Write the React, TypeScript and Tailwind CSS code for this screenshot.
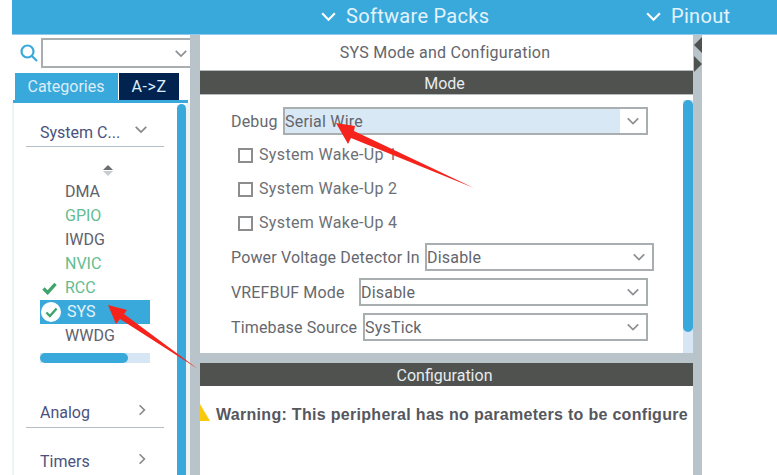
const font = { fontFamily: "Roboto, sans-serif" };

function Chevron({ className }: { className: string }) {
  return (
    <svg viewBox="0 0 16 10" fill="none" stroke="currentColor" strokeWidth="2" className={className}>
      <path d="M2 2l6 6 6-6" />
    </svg>
  );
}

function CheckRow({ label }: { label: string }) {
  return (
    <div className="flex h-[28px] items-center pl-[7px]">
      <div className="h-[15px] w-[15px] border-2 border-[#8b8d8f] bg-white" />
      <span className="ml-[6px] text-[16px] tracking-[0.35px] text-[#6e7076]">{label}</span>
    </div>
  );
}

function SelectRow(props: { label: string; labelW: string; selectW: string; value: string; first?: boolean }) {
  return (
    <div className="flex h-[28px] items-center">
      <span className={`${props.labelW} shrink-0 pt-[2px] text-[16px] tracking-[0.15px] text-[#66686f]`}>{props.label}</span>
      <div className={`${props.selectW} flex h-[28px] items-center border-2 border-[#a9aeb1] bg-white`}>
        <div className={`flex h-full flex-1 items-center pt-[2px] text-[16px] tracking-[0.2px] text-[#63656c] ${props.first ? "bg-[#d9e8f5]" : ""}`}>
          {props.value}
        </div>
        <Chevron className="mx-[6px] h-[10px] w-[14px] text-[#8e9093]" />
      </div>
    </div>
  );
}

function SideItem({ label, green, check }: { label: string; green?: boolean; check?: boolean }) {
  return (
    <div className={`relative flex h-[24px] items-center pl-[25px] text-[16px] ${green ? "text-[#63bd90]" : "text-[#5f616b]"}`}>
      {check && (
        <svg viewBox="0 0 16 14" className="absolute left-[2px] top-[6px] h-[13px] w-[15px] text-[#3fa46a]" fill="none" stroke="currentColor" strokeWidth="3.5">
          <path d="M1.5 7l4.5 4.5L14.5 2" />
        </svg>
      )}
      {label}
    </div>
  );
}

function Group({ label, open }: { label: string; open?: boolean }) {
  return (
    <div className={`ml-[12px] flex h-[31px] w-[138px] items-center border-b border-[#b4bec6] pl-[14px] text-[16px] text-[#4a5280] ${open ? "pt-[4px]" : "pt-[1px]"}`}>
      <span className="flex-1">{label}</span>
      {open ? (
        <Chevron className="mr-[16px] mb-[8px] h-[9px] w-[14px] text-[#85878a]" />
      ) : (
        <svg viewBox="0 0 10 16" fill="none" stroke="#85878a" strokeWidth="2" className="mr-[18px] mb-[6px] h-[14px] w-[8px]">
          <path d="M2 2l6 6-6 6" />
        </svg>
      )}
    </div>
  );
}

export default function App() {
  return (
    <div className="relative flex h-[475px] w-[777px] flex-col overflow-hidden bg-white" style={font}>
      {/* top bar */}
      <div className="ml-[12px] flex h-[35px] shrink-0 items-center border-b border-[#8fcbe9] bg-[#39a9dc] pb-[2px] text-[20px] tracking-[0.3px] text-[#e4f3fb]">
        <Chevron className="ml-[308px] h-[11px] w-[17px] text-white" />
        <span className="ml-[9px] w-[299px]">Software Packs</span>
        <Chevron className="h-[11px] w-[17px] text-white" />
        <span className="ml-[9px]">Pinout</span>
      </div>

      <div className="flex min-h-0 flex-1">
        {/* left tree */}
        <div className="ml-[12px] flex w-[178px] shrink-0 flex-col">
          <div className="flex h-[33px] shrink-0 items-center pt-[3px]">
            <svg viewBox="0 0 18 18" fill="none" stroke="#39a9dc" strokeWidth="2.2" className="ml-[8px] h-[18px] w-[18px]">
              <circle cx="7.5" cy="7.5" r="6" />
              <path d="M12 12l5 5" />
            </svg>
            <div className="ml-[3px] flex h-[30px] flex-1 items-center justify-end border-2 border-r-0 border-[#a9aeb1] pr-[2px]">
              <Chevron className="h-[9px] w-[14px] text-[#8e9093]" />
            </div>
          </div>
          <div className="mt-[5px] flex h-[27px] shrink-0 gap-[1px] pl-[3px] text-[16px] text-[#dcedf7]">
            <div className="flex w-[103px] items-center justify-center bg-[#39a9dc] pr-[1px]">Categories</div>
            <div className="flex w-[60px] items-center justify-center bg-[#022350] tracking-[0.6px]">A-&gt;Z</div>
          </div>
          <div className="ml-[1px] mr-[2px] h-[3px] shrink-0 bg-[#39a9dc]" />
          <div className="flex min-h-0 flex-1 border-l-2 border-[#eef3f5]">
            <div className="w-[163px] shrink-0">
              <div className="pt-[13px]">
                <Group label="System C..." open />
              </div>
              <div className="ml-[26px] w-[110px]">
                <div className="flex h-[32px] flex-col items-center justify-center gap-[1px] pt-[14px] pl-[26px]">
                  <div className="h-0 w-0 border-x-[5px] border-b-[5px] border-x-transparent border-b-[#6b6e70]" />
                  <div className="h-0 w-0 border-x-[5px] border-t-[5px] border-x-transparent border-t-[#c9cccd]" />
                </div>
                <div className="pt-[1px]">
                  <SideItem label="DMA" />
                  <SideItem label="GPIO" green />
                  <SideItem label="IWDG" />
                  <SideItem label="NVIC" green />
                  <SideItem label="RCC" green check />
                  <div className="relative flex h-[24px] items-center bg-[#39a9dc] pl-[27px] text-[16px] text-[#e4f3fb]">
                    <div className="absolute left-[1px] top-[2px] flex h-[20px] w-[20px] items-center justify-center rounded-full bg-white">
                      <svg viewBox="0 0 16 14" className="h-[11px] w-[13px]" fill="none" stroke="#3fa46a" strokeWidth="3">
                        <path d="M1.5 7l4.5 4.5L14.5 2" />
                      </svg>
                    </div>
                    SYS
                  </div>
                  <SideItem label="WWDG" />
                </div>
                <div className="mt-[5px] h-[10px] w-[110px] bg-[#d6e6f4]">
                  <div className="h-full w-[88px] rounded-full bg-[#39a9dc]" />
                </div>
              </div>
              <div className="pt-[34px]">
                <Group label="Analog" />
              </div>
              <div className="pt-[18px]">
                <Group label="Timers" />
              </div>
            </div>
            <div className="mt-[1px] w-[9px] shrink-0 rounded-t-full bg-[#39a9dc]" />
            <div className="w-[4px] shrink-0 bg-[#eef4f5]" />
          </div>
        </div>

        {/* left splitter */}
        <div className="w-[10px] shrink-0 bg-[#b8c4ca]" />

        {/* mode panel */}
        <div className="flex w-[493px] shrink-0 flex-col overflow-hidden bg-white">
          <div className="flex h-[35px] shrink-0 items-center justify-center pt-[1px] pr-[3px] text-[16px] tracking-[0.25px] text-[#63656c]">
            SYS Mode and Configuration
          </div>
          <div className="flex h-[25px] shrink-0 items-center justify-center border-y border-[#b5bcc0] bg-[#505250] pt-[2px] pr-[4px] text-[16px] text-[#e6ecef]">
            Mode
          </div>
          <div className="flex min-h-0 flex-1">
            <div className="flex flex-1 flex-col gap-[6px] pl-[31px] pt-[12px]">
              <SelectRow label="Debug" labelW="w-[52px]" selectW="w-[365px]" value="Serial Wire" first />
              <CheckRow label="System Wake-Up 1" />
              <CheckRow label="System Wake-Up 2" />
              <CheckRow label="System Wake-Up 4" />
              <SelectRow label="Power Voltage Detector In" labelW="w-[194px]" selectW="w-[229px]" value="Disable" />
              <div className="mt-[1px]">
                <SelectRow label="VREFBUF Mode" labelW="w-[128px]" selectW="w-[289px]" value="Disable" />
              </div>
              <div className="mt-[1px]">
                <SelectRow label="Timebase Source" labelW="w-[132px]" selectW="w-[285px]" value="SysTick" />
              </div>
            </div>
            <div className="mt-[5px] h-[253px] w-[10px] shrink-0 bg-[#d6e6f4]">
              <div className="h-[232px] rounded-full bg-[#39a9dc]" />
            </div>
          </div>
          <div className="h-[10px] shrink-0 bg-[#b8c4ca]" />
          <div className="flex h-[23px] shrink-0 items-center justify-center bg-[#505250] pt-[2px] pr-[4px] text-[16px] text-[#e6ecef]">
            Configuration
          </div>
          <div className="flex h-[89px] shrink-0 items-start pt-[18px] whitespace-nowrap">
            <svg viewBox="0 0 20 17" className="ml-[-10px] h-[17px] w-[20px] shrink-0">
              <path d="M10 0l10 17H0z" fill="#fbc90b" />
            </svg>
            <span className="ml-[6px] pt-[1px] text-[16px] font-bold leading-[20px] tracking-[0.3px] text-[#55575f]" style={{ fontFamily: "'Liberation Sans', sans-serif" }}>
              Warning: This peripheral has no parameters to be configure
            </span>
          </div>
        </div>

        {/* right splitter */}
        <div className="flex w-[9px] shrink-0 flex-col items-end gap-[3px] bg-[#b8c4ca] pt-[2px]">
          <svg viewBox="0 0 8 16" className="h-[16px] w-[8px]">
            <path d="M8 0v16L0 8z" fill="#505250" />
          </svg>
          <svg viewBox="0 0 8 16" className="h-[16px] w-[8px]">
            <path d="M0 0v16l8-8z" fill="#505250" />
          </svg>
        </div>
      </div>

      {/* red annotation arrows */}
      <svg className="pointer-events-none absolute left-0 top-0" width="777" height="475" viewBox="0 0 777 475">
        <path d="M336 123l19 3-1 5 120 57-123-50-3 6z" fill="#f5231b" />
        <path d="M108 305l19 5-3 4 74 55-78-50-4 5z" fill="#f5231b" />
      </svg>
    </div>
  );
}
